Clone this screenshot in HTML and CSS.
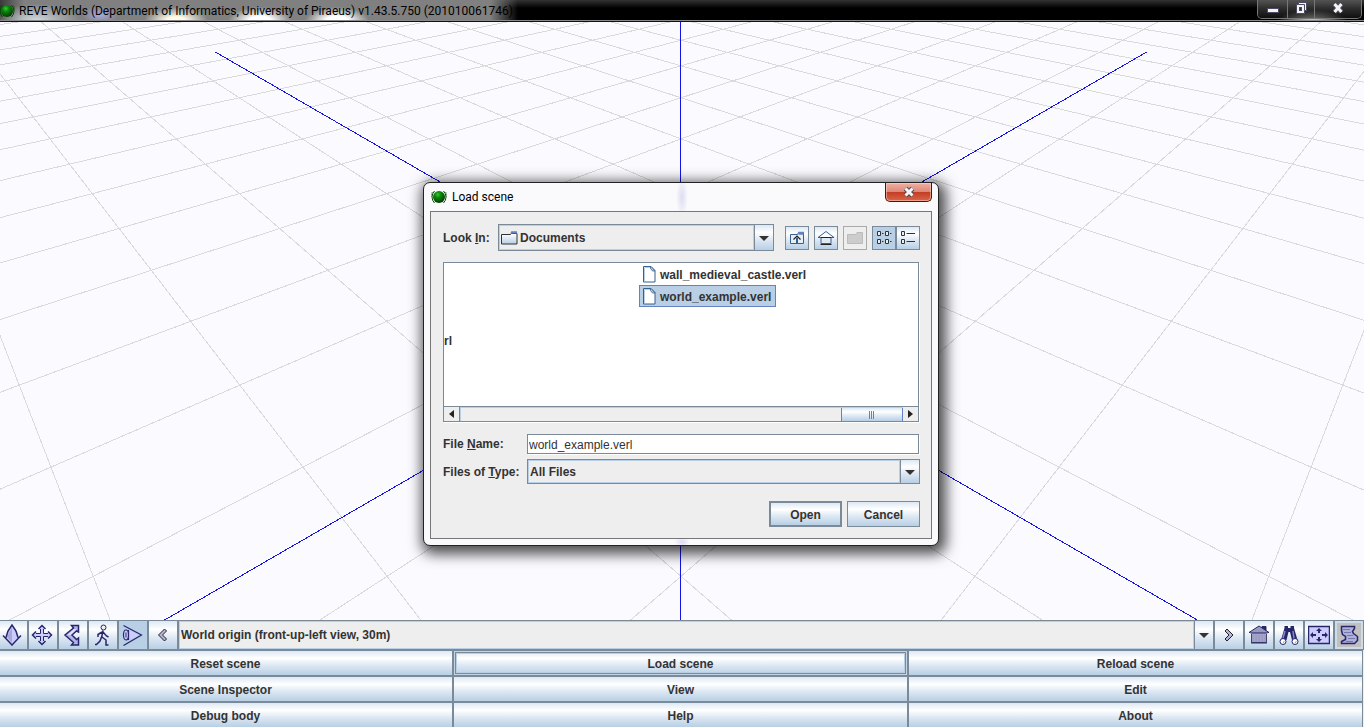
FILE: index.html
```html
<!DOCTYPE html>
<html lang="en">
<head>
<meta charset="utf-8">
<title>REVE Worlds</title>
<link rel="stylesheet" href="styles.css">
</head>
<body>
<div class="app">
  <header class="titlebar">
    <svg class="orb" viewBox="0 0 16 16" aria-hidden="true"><use href="#orb"/></svg>
    <h1 class="titlebar-text">REVE Worlds (Department of Informatics, University of Piraeus) v1.43.5.750 (201010061746)</h1>
    <div class="window-controls">
      <button class="wc wc-min" aria-label="Minimize"><svg width="14" height="12" viewBox="0 0 14 12"><rect x="1.500" y="5.500" width="11" height="4" fill="#f4f4f4" stroke="#4a4a60"/></svg></button>
      <button class="wc wc-max" aria-label="Restore"><svg width="14" height="14" viewBox="0 0 14 14"><path d="M4.500 1.500h8v8h-2v3h-8v-9h2z" fill="#f4f4f4" stroke="#4a4a60"/><path d="M4.500 3.500h6v6" fill="none" stroke="#4a4a60"/><rect x="5.500" y="6.500" width="2" height="3" fill="#333" stroke="#4a4a60"/></svg></button>
      <button class="wc wc-close" aria-label="Close"><svg width="14" height="12" viewBox="0 0 14 12"><path d="M3.500 2l7 8M10.500 2l-7 8" stroke="#4a4a60" stroke-width="5"/><path d="M3.500 2l7 8M10.500 2l-7 8" stroke="#f4f4f4" stroke-width="3"/></svg></button>
    </div>
  </header>

  <main class="viewport">
    <svg class="scene" viewBox="0 22 1364 598" preserveAspectRatio="xMidYMid slice" role="img" aria-label="World grid">
      <path id="grid" class="grid-lines"/>
      <path id="axes" class="axis-lines"/>
    </svg>
  </main>

  <div class="toolbar">
    <button class="tool tool-nav" aria-label="Elevate"><svg class="ico" viewBox="0 0 22 22"><path d="M1 12l10 9 10-9-2-1-4 3V8L11 1 7 8v6l-4-3z" fill="#fff"/><path d="M11 1l4 6 2 6.500L11 20.500 5 13.500 7 7z" fill="#ccccff"/><path d="M11 3v16l-5-6z" fill="#a8a8dc"/><path d="M7 7l4-6 4 6M7 7l-2 6.500M15 7l2 6.500M2 11.500l9 9.500 9-9.500" fill="none" stroke="#26266b" stroke-width="1.500"/></svg></button>
    <button class="tool tool-nav" aria-label="Move"><svg class="ico" viewBox="0 0 22 22"><path d="M9.500 4h3v5.500H18v3h-5.500V18h-3v-5.500H4v-3h5.500z" fill="#ccccff" stroke="#26266b"/><path d="M7.500 5L11 1.500 14.500 5M7.500 17l3.500 3.500 3.500-3.500M5 7.500L1.500 11 5 14.500M17 7.500l3.500 3.500-3.500 3.500" fill="#ccccff" stroke="#26266b" stroke-width="1.500"/></svg></button>
    <button class="tool tool-nav" aria-label="Rotate"><svg class="ico" viewBox="0 0 22 22"><path d="M10.500 1.500h7V8l-2-1-4.500 4 4.500 4.500 2-1.500v7h-7l2-2.500L4 11l8.500-7z" fill="#b4b4e8" stroke="#26266b" stroke-width="1.500"/><path d="M13 5l-6.500 6h3l6-5.500" fill="#e0e0ff"/></svg></button>
    <button class="tool tool-nav" aria-label="Walk"><svg class="ico" viewBox="0 0 22 22"><circle cx="12.500" cy="3.500" r="2.500" fill="#eee" stroke="#26266b"/><path d="M12 6.500L10.500 14M11 8L7 10.500V13M12 8l3.500 4 2 1M10.500 13L9 17l-3.500 3.500H4M11 13l4 3v5h2.500" fill="none" stroke="#26266b" stroke-width="1.500"/></svg></button>
    <button class="tool tool-nav tool-on" aria-label="Look" aria-pressed="true"><svg class="ico" viewBox="0 0 22 22"><path d="M7 5.500L18 11 7 16.500z" fill="#ccccff"/><path d="M2.500 1.500l18 9.500-18 10.500M7.500 6v10" fill="none" stroke="#26266b" stroke-width="1.200"/><ellipse cx="5" cy="11" rx="2.500" ry="5" fill="#ccccff" stroke="#26266b" stroke-width="1.200"/><path d="M5 8.500v5" stroke="#26266b"/></svg></button>
    <button class="tool tool-nav" aria-label="Previous viewpoint"><svg class="ico" viewBox="0 0 22 22"><path d="M13.500 5l2 2-4 4 4 4-2 2L7.500 11z" fill="#b4b4d8" stroke="#222"/></svg></button>
    <label class="combo combo-view">
      <span class="combo-field"><select aria-label="Viewpoint"><option>World origin (front-up-left view, 30m)</option></select></span>
      <span class="combo-arrow"><svg width="10" height="5" viewBox="0 0 10 5"><path d="M0 0h10L5 5z" fill="#333"/></svg></span>
    </label>
    <button class="tool" aria-label="Next viewpoint"><svg class="ico" viewBox="0 0 22 22"><path d="M9 5L7 7l4 4-4 4 2 2 6-6z" fill="#b4b4d8" stroke="#222"/></svg></button>
    <button class="tool" aria-label="Home"><svg class="ico" viewBox="0 0 22 22"><path d="M14 5V2.500h4V9" fill="#26266b" stroke="#26266b"/><path d="M1 8.500L11 2l10 6.500z" fill="#9a9abf" stroke="#26266b"/><path d="M3.500 9.500h15v9h-15z" fill="#a5a5cc" stroke="#444466"/><path d="M2 9h18M5 11v7M8 11v7M11 11v7M14 11v7M17 11v7" stroke="#9494c0"/><path d="M3 19h16" stroke="#26266b"/></svg></button>
    <button class="tool" aria-label="Find"><svg class="ico" viewBox="0 0 22 22"><path d="M6.500 2H10v2h2.500V2H16v2l3.500 12h-5.500L12 8h-1.500l-2 8H3L6.500 4z" fill="#26266b"/><path d="M7 7l-2 7M15 7l1 8" stroke="#8888cc" stroke-width="1.500"/><circle cx="5" cy="17.500" r="3" fill="#fff" stroke="#26266b"/><circle cx="17" cy="17.500" r="3" fill="#fff" stroke="#26266b"/><path d="M5 19l1.500-2M17 19l1.500-2" stroke="#9999cc"/></svg></button>
    <button class="tool" aria-label="Fit to view"><svg class="ico" viewBox="0 0 22 22"><path d="M.5 2.500h21v17H.5z" fill="#ccccff" stroke="#26266b" stroke-width="1.500"/><path d="M11 4l3 3h-2v2h-2V7H8zM11 18l3-3h-2v-2h-2v2H8zM2 11l3-3v2h3v2H5v2zM20 11l-3-3v2h-3v2h3v2z" fill="#26266b"/></svg></button>
    <button class="tool tool-script" aria-label="Script"><svg class="ico" viewBox="0 0 22 22"><path d="M3.500 2.500h13v2l-2 3 1 2 4 3v4l-3 3h-13v-2l4-2v-3l-3-2-1-4z" fill="#b0b0dc" stroke="#26266b" stroke-width="1.500"/><path d="M5 5.500h7M6 8.500h7M9 11.500h6M10 14.500h7M8 17.500h7" stroke="#7777aa"/></svg></button>
  </div>

  <nav class="commands">
    <button class="cmd">Reset scene</button>
    <button class="cmd cmd-focus">Load scene</button>
    <button class="cmd">Reload scene</button>
    <button class="cmd">Scene Inspector</button>
    <button class="cmd">View</button>
    <button class="cmd">Edit</button>
    <button class="cmd">Debug body</button>
    <button class="cmd">Help</button>
    <button class="cmd">About</button>
  </nav>
</div>

<div class="overlay">
  <section class="dialog" role="dialog" aria-labelledby="dialog-title">
    <header class="dialog-head">
      <svg class="orb" viewBox="0 0 16 16" aria-hidden="true"><use href="#orb"/></svg>
      <h2 class="dialog-title" id="dialog-title">Load scene</h2>
      <button class="dialog-close" aria-label="Close"><svg width="14" height="12" viewBox="0 0 14 12"><path d="M3.500 2.500l7 7M10.500 2.500l-7 7" stroke="#4d4a55" stroke-width="5"/><path d="M3.500 2.500l7 7M10.500 2.500l-7 7" stroke="#f4f4f4" stroke-width="3"/></svg></button>
    </header>
    <form class="client" onsubmit="return false">
      <div class="look-row">
        <label class="look-label" for="look">Look <u>I</u>n:</label>
        <span class="combo combo-look">
          <span class="combo-field">
            <svg width="17" height="14" viewBox="0 0 17 14" aria-hidden="true"><path d="M9 2.500l1.500-2H16v3" fill="#6382bf"/><path d="M.5 3.500h9l1-1h5.500v10.500H.5z" fill="url(#paper)" stroke="#333"/><path d="M10 1.500h6" stroke="#6382bf" stroke-width="2"/></svg>
            <select id="look"><option>Documents</option></select>
          </span>
          <span class="combo-arrow"><svg width="10" height="5" viewBox="0 0 10 5"><path d="M0 0h10L5 5z" fill="#333"/></svg></span>
        </span>
        <button type="button" class="nav-btn" aria-label="Up one level"><svg width="16" height="16" viewBox="0 0 16 16"><path d="M1.500 4.500h7l1-2h5v11h-13z" fill="#e6eef6" stroke="#36618e"/><path d="M9 2.500h6M9.500 4h5" stroke="#6382bf" stroke-width="1.500"/><path d="M4.500 9.500L8 6l3.500 3.500" fill="none" stroke="#222" stroke-width="1.200"/><path d="M8 7.500V14" stroke="#36618e" stroke-width="2"/></svg></button>
        <button type="button" class="nav-btn" aria-label="Home folder"><svg width="16" height="16" viewBox="0 0 16 16"><path d="M0 7.500L8 1.500l8 6z" fill="#fff" stroke="#36618e"/><path d="M3 7.500h10v6H3z" fill="#dfe9f3" stroke="#36618e"/><path d="M2.500 14.500h11M3 7.500h10" stroke="#222"/></svg></button>
        <button type="button" class="nav-btn nav-off" aria-label="New folder" disabled><svg width="16" height="14" viewBox="0 0 16 14"><path d="M.5 3.500h8l1.500-2h5.500v11H.5z" fill="#ccc" stroke="#bbb"/></svg></button>
        <span class="toggle">
          <button type="button" class="nav-btn nav-on" aria-label="List view" aria-pressed="true"><svg width="16" height="16" viewBox="0 0 16 16"><path d="M1.500 1.500h3v4h-3zM9.500 1.500h3v4h-3zM1.500 9.500h3v4h-3zM9.500 9.500h3v4h-3z" fill="#e6eef6" stroke="#333"/><path d="M6 3.500h1.500M14 3.500h1.500M6 11.500h1.500M14 11.500h1.500" stroke="#333"/></svg></button>
          <button type="button" class="nav-btn" aria-label="Details view"><svg width="16" height="16" viewBox="0 0 16 16"><path d="M1.500 1.500h3v4h-3zM1.500 9.500h3v4h-3z" fill="#e6eef6" stroke="#333"/><path d="M6.500 3.500H15M6.500 11.500H15" stroke="#333"/></svg></button>
        </span>
      </div>

      <div class="browser">
        <ul class="files">
          <li class="file file-cut">rl</li>
          <li class="file"><svg width="14" height="17" viewBox="0 0 14 17" aria-hidden="true"><use href="#doc"/></svg>wall_medieval_castle.verl</li>
          <li class="file file-on"><svg width="14" height="17" viewBox="0 0 14 17" aria-hidden="true"><use href="#doc"/></svg>world_example.verl</li>
        </ul>
        <div class="scroll">
          <button type="button" class="scroll-btn" aria-label="Scroll left"><svg width="5" height="8" viewBox="0 0 5 8"><path d="M5 0v8L0 4z" fill="#222"/></svg></button>
          <div class="scroll-track"><div class="scroll-thumb"><svg width="6" height="8" viewBox="0 0 6 8"><path d="M.5 0v8M2.500 0v8M4.500 0v8" stroke="#6382bf"/></svg></div></div>
          <button type="button" class="scroll-btn scroll-right" aria-label="Scroll right"><svg width="5" height="8" viewBox="0 0 5 8"><path d="M0 0v8l5-4z" fill="#222"/></svg></button>
        </div>
      </div>

      <div class="fields">
        <label for="fname">File <u>N</u>ame:</label>
        <input id="fname" class="text" type="text" value="world_example.verl">
        <label for="ftype">Files of <u>T</u>ype:</label>
        <span class="combo combo-type">
          <span class="combo-field"><select id="ftype"><option>All Files</option></select></span>
          <span class="combo-arrow"><svg width="10" height="5" viewBox="0 0 10 5"><path d="M0 0h10L5 5z" fill="#333"/></svg></span>
        </span>
      </div>

      <div class="actions">
        <button class="btn btn-default">Open</button>
        <button type="button" class="btn">Cancel</button>
      </div>
    </form>
  </section>
</div>

<svg class="defs" aria-hidden="true">
  <defs>
    <radialGradient id="ball" cx=".4" cy=".3" r=".7"><stop offset="0" stop-color="#35c935"/><stop offset=".35" stop-color="#0a8a0a"/><stop offset="1" stop-color="#023a02"/></radialGradient>
    <linearGradient id="paper" x1="0" y1="0" x2="0" y2="1"><stop offset="0" stop-color="#fff"/><stop offset="1" stop-color="#b8cfe5"/></linearGradient>
    <symbol id="orb" viewBox="0 0 16 16"><circle cx="8" cy="8" r="6" fill="url(#ball)"/><path d="M3.500 2Q1 4.500 1 8t2.500 6M12.500 2Q15 4.500 15 8t-2.500 6" fill="none" stroke="#064a06"/><path d="M1.500 3Q0 5 0 8M14.500 3Q16 5 16 8" fill="none" stroke="#064a06" stroke-dasharray="1 1"/></symbol>
    <symbol id="doc" viewBox="0 0 14 17"><path d="M1.500.5h7.500l4 4v11.500H1.500z" fill="#fff" stroke="#36618e"/><path d="M2.500 15V1.500h6" fill="none" stroke="#b8cfe5"/><path d="M8.500.5v2l2 2.500H13L9 .5z" fill="#b8cfe5" stroke="#36618e" stroke-width=".8"/></symbol>
  </defs>
</svg>
<script src="scene.js"></script>
</body>
</html>
```
FILE: styles.css
```css
* { box-sizing: border-box; }

body {
  margin: 0;
  height: 100vh;
  overflow: hidden;
  background: #eee;
  color: #333;
  font: bold 12px/16px "Liberation Sans", Arial, sans-serif;
}

button, select, input { font: inherit; color: inherit; margin: 0; padding: 0; border-radius: 0; }
h1, h2, ul { margin: 0; padding: 0; }
svg { display: block; flex: none; }
.defs { position: absolute; width: 0; height: 0; }

.app { display: flex; flex-direction: column; height: 100vh; overflow: hidden; }

/* main window title */
.titlebar {
  display: flex;
  align-items: center;
  gap: 4px;
  height: 22px;
  border-bottom: 1px solid #111;
  background:
    radial-gradient(ellipse 32px 14px at 176px 21px, #fffbe8 30%, transparent),
    radial-gradient(ellipse 32px 14px at 260px 21px, #fff 35%, transparent),
    radial-gradient(ellipse 32px 14px at 337px 21px, #fff 35%, transparent),
    radial-gradient(ellipse 18px 9px at 100px 15px, #a9a9e0, transparent),
    radial-gradient(ellipse 44px 16px at 36px 20px, #d0d8de, transparent),
    radial-gradient(ellipse 36px 12px at 1312px 22px, #f4ece8, transparent),
    linear-gradient(90deg, #3a3a3a, #808080 24px, #808080 490px, transparent 518px),
    linear-gradient(#333, #000 8px);
  box-shadow: inset 0 -1px #8a8a8a;
}
.orb { width: 16px; height: 16px; }
.titlebar .orb { margin-left: -1px; }
.titlebar-text {
  flex: 1;
  color: #000;
  font: 12px/16px Roboto, "Open Sans", sans-serif;
  white-space: nowrap;
}
.window-controls {
  display: flex;
  align-self: flex-start;
  height: 19px;
  margin-right: 2px;
  border: 1px solid #777;
  border-top: 0;
  border-radius: 0 0 5px 5px;
  overflow: hidden;
}
.wc {
  display: grid;
  place-items: center;
  border: 0;
  background: linear-gradient(rgba(90, 90, 90, .8), rgba(30, 30, 30, .5));
}
.wc-min { width: 29px; }
.wc-max { width: 27px; padding-bottom: 2px; border-left: 1px solid #777; }
.wc-close { width: 47px; padding-bottom: 2px; border-left: 1px solid #777; }

/* 3D view */
.viewport { flex: 1; min-height: 0; background: #fafaff; }
.scene { width: 100%; height: 100%; }
.grid-lines, .axis-lines { fill: none; shape-rendering: crispEdges; }
.grid-lines { stroke: #dadada; }
.axis-lines { stroke: #1414e6; }

/* toolbar */
.toolbar { display: flex; height: 30px; margin-left: -2px; }
.tool {
  display: grid;
  place-items: center;
  flex: none;
  width: 30px;
  border: 1px solid #7a8a99;
  background: linear-gradient(#dde8f3, #fff 30%, #dde8f3 60%, #b8cfe5);
}
.tool-nav { padding-right: 2px; }
.tool-on { background: #b8cfe5; }
.tool-script { background: #c0c0c0; box-shadow: inset 0 0 0 2px #cfdbe6; }
.ico { width: 22px; height: 22px; }

/* drop-downs */
.combo { display: flex; border: 1px solid #7a8a99; background: #eee; min-width: 0; }
.combo-view { flex: 1; }
.combo-field {
  display: flex;
  flex: 1;
  align-items: center;
  gap: 2px;
  min-width: 0;
  padding-left: 1px;
  border: 1px solid #b8cfe5;
}
.combo-field select {
  flex: 1;
  min-width: 0;
  height: 100%;
  border: 0;
  outline: 0;
  appearance: none;
  background: transparent;
}
.combo-arrow {
  display: grid;
  place-items: center;
  width: 19px;
  padding: 1px 1px 0 0;
  border-left: 1px solid #7a8a99;
  background: linear-gradient(#dde8f3, #fff 30%, #dde8f3 60%, #b8cfe5);
}

/* command buttons */
.commands {
  display: grid;
  grid-template-columns: repeat(3, 1fr);
  grid-template-rows: 26px 26px 25px;
  margin: 0 1px 0 -2px;
}
.cmd {
  padding-top: 2px;
  border: 1px solid #7a8a99;
  background: linear-gradient(#dde8f3, #fff 30%, #dde8f3 60%, #b8cfe5);
}
.cmd:nth-child(n + 7) { border-bottom: 0; }
.cmd-focus { box-shadow: inset 0 0 0 1px #c4d4e3, inset 0 0 0 2px #7a8a99, inset 0 0 0 3px #b8cfe5; }

/* dialog */
.overlay {
  position: absolute;
  inset: 0;
  display: grid;
  place-items: center;
  padding: 1px 2px 0 0;
  pointer-events: none;
}
.dialog {
  width: 516px;
  padding: 0 6px 6px;
  border: 1px solid #222;
  border-radius: 7px;
  background:
    radial-gradient(ellipse 6px 20px at 258px 14px, #dcdcf2, transparent),
    radial-gradient(ellipse 8px 5px at 258px 359px, #dcdcf2, transparent),
    #fafafd;
  box-shadow: 3px 4px 14px 4px rgba(0, 0, 0, .7);
  pointer-events: auto;
}
.dialog-head { display: flex; align-items: center; gap: 5px; height: 28px; padding-left: 1px; }
.dialog-title {
  flex: 1;
  color: #000;
  font: 12px/16px Roboto, "Open Sans", sans-serif;
}
.dialog-close {
  display: grid;
  place-items: center;
  align-self: flex-start;
  width: 47px;
  height: 19px;
  border: 1px solid #4a1510;
  border-top: 0;
  border-radius: 0 0 5px 5px;
  background: linear-gradient(#f0b0a4, #dd8878 48%, #c23c22 50%, #d8664a);
  box-shadow: inset 0 0 0 1px rgba(255, 220, 210, .5);
}
.client {
  padding: 12px 11px 11px 12px;
  border: 1px solid #777;
  background: #eee;
}
.look-row { display: flex; align-items: center; }
.look-label { width: 55px; }
.combo-look { flex: 1; height: 27px; margin-right: 11px; }
.nav-btn {
  display: grid;
  place-items: center;
  width: 24px;
  height: 24px;
  margin-right: 5px;
  border: 1px solid #7a8a99;
  background: linear-gradient(#dde8f3, #fff 30%, #dde8f3 60%, #b8cfe5);
}
.nav-off { border-color: #aaa; background: #eee; }
.nav-on { background: #b8cfe5; }
.toggle { display: flex; }
.toggle .nav-btn { margin-right: 0; }

.browser {
  margin: 11px 1px 12px 0;
  border: 1px solid #7a8a99;
  background: #fff;
  box-shadow: 1px 1px #fff;
}
.files {
  display: grid;
  grid-template-columns: 195px 1fr;
  grid-template-rows: repeat(4, 22px);
  height: 143px;
  list-style: none;
}
.file {
  display: flex;
  align-items: center;
  grid-column: 2;
  justify-self: start;
  gap: 4px;
  padding: 1px 4px 0 2px;
  border: 1px solid transparent;
}
.file-cut { grid-area: 4 / 1; padding: 2px 0 0; border: 0; }
.file-on { border-color: #6382bf; background: #b8cfe5; }
.scroll { display: flex; height: 15px; border-top: 1px solid #7a8a99; background: #eee; }
.scroll-btn { display: grid; place-items: center; width: 16px; border: 0; border-right: 1px solid #7a8a99; background: #eee; }
.scroll-right { width: 15px; border-right: 0; }
.scroll-track { flex: 1; border-top: 1px solid #b8cfe5; border-left: 1px solid #b8cfe5; }
.scroll-thumb {
  display: grid;
  place-items: center;
  width: 62px;
  height: 100%;
  margin-left: auto;
  border: 1px solid #6382bf;
  border-width: 0 1px;
  background: linear-gradient(#dde8f3, #fff 30%, #dde8f3 60%, #b8cfe5);
}

.fields {
  display: grid;
  grid-template-columns: 84px 1fr;
  grid-template-rows: 20px 25px;
  row-gap: 5px;
  align-items: center;
}
.text {
  height: 20px;
  margin-right: 1px;
  padding: 1px 1px 0;
  border: 1px solid #7a8a99;
  background: #fff;
  box-shadow: 1px 1px #fff;
  font-weight: normal;
}
.combo-type { height: 25px; }

.actions { display: flex; justify-content: flex-end; gap: 5px; margin-top: 17px; }
.btn {
  width: 73px;
  height: 26px;
  padding-top: 2px;
  border: 1px solid #7a8a99;
  background: linear-gradient(#dde8f3, #fff 30%, #dde8f3 60%, #b8cfe5);
}
.btn-default { border-width: 2px; }
```
FILE: scene.js
```js
// Ground plane seen along its diagonal: lines are straight in t = 1 / depth.
const CENTER_X = 681, SPREAD = 884.6, DEPTH = 9.02, HORIZON = -190.3, FALL = 4615;

function groundLine(c, side, top, bottom) {
  const at = (y) => {
    const t = (y - HORIZON) / FALL;
    return CENTER_X + side * SPREAD * ((2 * c + DEPTH) * t - 1);
  };
  return `M${at(top)} ${top}L${at(bottom)} ${bottom}`;
}

let grid = "";
for (let c = -6.5; c <= 20; c++) {
  grid += groundLine(c, 1, 22, 620) + groundLine(c, -1, 22, 620);
}
document.getElementById("grid").setAttribute("d", grid);
document.getElementById("axes").setAttribute("d",
  groundLine(0, 1, 52, 620) + groundLine(0, -1, 52, 620) + "M680.5 22V620");
```
